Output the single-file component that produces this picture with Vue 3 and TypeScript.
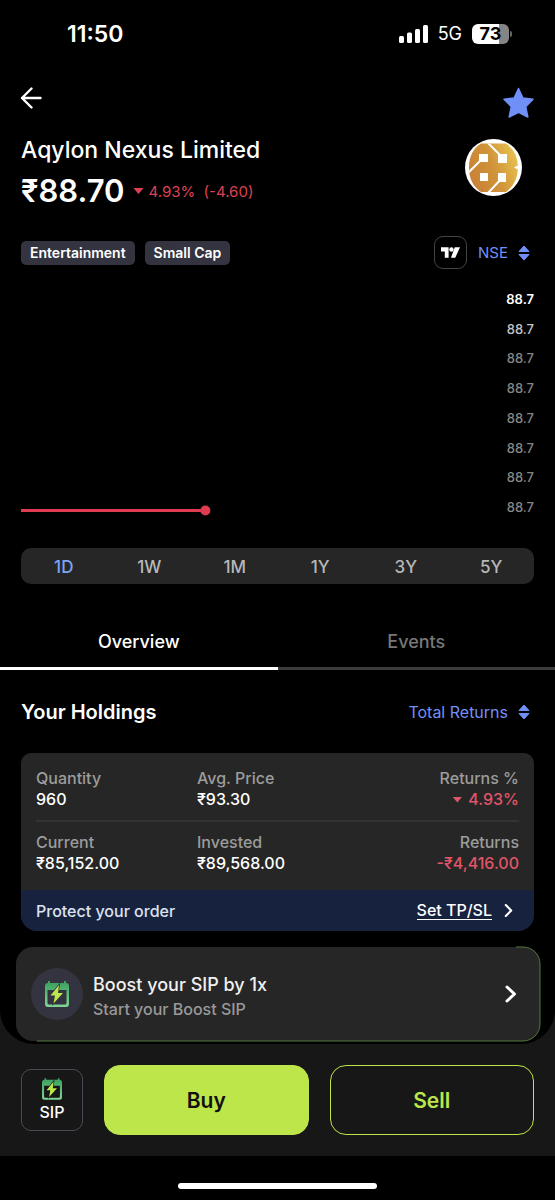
<script setup lang="ts">
import { ref } from 'vue'

interface Figure {
  label: string
  value: string
  loss?: boolean
  arrow?: boolean
}

const tags: string[] = ['Entertainment', 'Small Cap']
const axisLabels: string[] = Array.from({ length: 8 }, () => '88.7')
const periods: string[] = ['1D', '1W', '1M', '1Y', '3Y', '5Y']
const tabs: string[] = ['Overview', 'Events']

const figureRows: Figure[][] = [
  [
    { label: 'Quantity', value: '960' },
    { label: 'Avg. Price', value: '₹93.30' },
    { label: 'Returns %', value: '4.93%', loss: true, arrow: true },
  ],
  [
    { label: 'Current', value: '₹85,152.00' },
    { label: 'Invested', value: '₹89,568.00' },
    { label: 'Returns', value: '-₹4,416.00', loss: true },
  ],
]

const period = ref('1D')
const tab = ref('Overview')
const starred = ref(true)
</script>

<template>
  <div class="screen">
    <div class="content">
      <div class="status">
        <span class="clock">11:50</span>
        <div class="status-right">
          <svg class="signal" viewBox="0 0 29 18" aria-hidden="true">
            <rect x="0" y="11" width="5" height="7" rx="1.5" />
            <rect x="8" y="7.500" width="5" height="10.500" rx="1.500" />
            <rect x="16" y="4" width="5" height="14" rx="1.500" />
            <rect x="24" y="0" width="5" height="18" rx="1.500" />
          </svg>
          <span class="network">5G</span>
          <span class="battery"><span class="battery-level">73</span></span>
        </div>
      </div>

      <header class="nav">
        <button class="plain" type="button" aria-label="Back">
          <svg class="back" viewBox="0 0 22 22" aria-hidden="true">
            <path d="M20.500 11H2M11.500 1.500 2 11l9.500 9.500" />
          </svg>
        </button>
        <button class="plain" type="button" aria-label="Watchlist" :aria-pressed="starred" @click="starred = !starred">
          <svg class="star" viewBox="0 0 32 32" aria-hidden="true">
            <path d="M16 1.500 20.400 11 30.500 12.300 23.200 19.600 25.300 30 16 25.400 6.700 30 8.800 19.600 1.500 12.300 11.600 11Z" />
          </svg>
        </button>
      </header>

      <section class="identity">
        <div>
          <h1>Aqylon Nexus Limited</h1>
          <p class="quote">
            <span class="price">₹88.70</span>
            <span class="change"><i class="down"></i>4.93%&nbsp; (-4.60)</span>
          </p>
        </div>
        <svg class="logo" viewBox="0 0 57 57" aria-hidden="true">
          <defs>
            <linearGradient id="gold" x1="0" y1=".7" x2="1" y2=".3">
              <stop offset="0" stop-color="#c77d36" />
              <stop offset=".5" stop-color="#d09439" />
              <stop offset="1" stop-color="#edca55" />
            </linearGradient>
            <clipPath id="coin"><path d="M16 4.500H41Q53 13 53 28.500T41 53H16Q4 45 4 28.500T16 4.500Z" /></clipPath>
          </defs>
          <circle cx="28.500" cy="28.500" r="28.500" fill="#fff" />
          <g clip-path="url(#coin)">
            <rect width="57" height="57" fill="url(#gold)" />
            <path d="M3 34 18 19M22 3 38 19M38 38 23 54" fill="none" stroke="#fff" stroke-width="2" />
            <path d="M57 24 49 28.500 57 33Z" fill="#fff" />
            <path d="M14 15h9v8h-9zM33 15h9v9h-9zM15 34h8v8h-8zM33 34h8v9h-8z" fill="#fff" />
          </g>
        </svg>
      </section>

      <section class="meta">
        <ul class="tags">
          <li v-for="tag in tags" :key="tag">{{ tag }}</li>
        </ul>
        <div class="market">
          <button class="chart-link" type="button" aria-label="Open advanced chart">
            <svg viewBox="0 0 20 11" aria-hidden="true">
              <path d="M0 0h8v11H4V4.500H0zM14.500 0H20l-5 11h-4.500z" />
              <circle cx="11" cy="2.300" r="2.300" />
            </svg>
          </button>
          <button class="switch exchange" type="button">
            NSE
            <svg class="sort" viewBox="0 0 12 16" aria-hidden="true">
              <path d="M6 1 11 6.500H1ZM6 15 11 9.500H1Z" />
            </svg>
          </button>
        </div>
      </section>

      <section class="chart" aria-label="Price chart">
        <svg class="plot" aria-hidden="true">
          <line x1="0" y1="220.500" x2="40%" y2="220.500" />
          <circle cx="40%" cy="220.500" r="5" />
        </svg>
        <ol class="axis">
          <li v-for="(label, i) in axisLabels" :key="i">{{ label }}</li>
        </ol>
      </section>

      <div class="periods">
        <button
          v-for="p in periods"
          :key="p"
          type="button"
          :class="{ active: p === period }"
          :aria-pressed="p === period"
          @click="period = p"
        >{{ p }}</button>
      </div>

      <div class="tabs" role="tablist">
        <button
          v-for="t in tabs"
          :key="t"
          type="button"
          role="tab"
          :class="{ active: t === tab }"
          :aria-selected="t === tab"
          @click="tab = t"
        >{{ t }}</button>
      </div>

      <section class="holdings">
        <div class="section-head">
          <h2>Your Holdings</h2>
          <button class="switch" type="button">
            Total Returns
            <svg class="sort" viewBox="0 0 12 16" aria-hidden="true">
              <path d="M6 1 11 6.500H1ZM6 15 11 9.500H1Z" />
            </svg>
          </button>
        </div>
        <div class="card">
          <div class="figures">
            <dl v-for="(row, i) in figureRows" :key="i">
              <div v-for="f in row" :key="f.label">
                <dt>{{ f.label }}</dt>
                <dd :class="{ loss: f.loss }"><i v-if="f.arrow" class="down"></i>{{ f.value }}</dd>
              </div>
            </dl>
          </div>
          <div class="protect">
            <span>Protect your order</span>
            <a href="#tpsl">
              <span class="underlined">Set TP/SL</span>
              <svg viewBox="0 0 8 12" aria-hidden="true"><path d="M1.500 1 6.500 6l-5 5" /></svg>
            </a>
          </div>
        </div>
      </section>

      <a class="boost" href="#boost">
        <svg class="boost-edge" aria-hidden="true">
          <rect x="0" y="0" width="100%" height="100%" rx="17" />
        </svg>
        <span class="boost-icon">
          <svg viewBox="0 0 24 26" aria-hidden="true">
            <defs>
              <linearGradient id="calA" x1="0" y1="0" x2="0" y2="1">
                <stop offset="0" stop-color="#3a9e5c" />
                <stop offset="1" stop-color="#7fd694" />
              </linearGradient>
            </defs>
            <path fill="url(#calA)" fill-rule="evenodd" d="M3 0h2v2h14V0h2v2q3 0 3 3v18q0 3-3 3H3q-3 0-3-3V5q0-3 3-3ZM2.500 9v13q0 1.500 1.500 1.500h16q1.500 0 1.500-1.500V9Z" />
            <path class="bolt" stroke="#33343f" d="M14 4 5.500 14.500H10L8.500 22.500 18 12h-5Z" />
          </svg>
        </span>
        <span class="boost-text">
          <strong>Boost your SIP by 1x</strong>
          <small>Start your Boost SIP</small>
        </span>
        <svg class="boost-arrow" viewBox="0 0 12 18" aria-hidden="true"><path d="M2 2l7.500 7L2 16" /></svg>
      </a>
    </div>

    <footer class="actions">
      <button class="sip" type="button">
        <svg viewBox="0 0 24 26" aria-hidden="true">
          <path fill="url(#calA)" fill-rule="evenodd" d="M3 0h2v2h14V0h2v2q3 0 3 3v18q0 3-3 3H3q-3 0-3-3V5q0-3 3-3ZM2.500 9v13q0 1.500 1.500 1.500h16q1.500 0 1.500-1.500V9Z" />
          <path class="bolt" stroke="#171717" d="M14 4 5.500 14.500H10L8.500 22.500 18 12h-5Z" />
        </svg>
        SIP
      </button>
      <button class="buy" type="button">Buy</button>
      <button class="sell" type="button">Sell</button>
    </footer>
    <div class="home"><span></span></div>
  </div>
</template>

<style>
body {
  background: #000;
}
</style>

<style scoped>
.screen {
  background: #171717;
  color: #fff;
  font-family: Inter, 'Liberation Sans', sans-serif;
  font-size: 16px;
  font-weight: 500;
}
.screen * {
  box-sizing: border-box;
}
button {
  font: inherit;
  color: inherit;
  background: none;
  border: 0;
  padding: 0;
  cursor: pointer;
}
a {
  color: inherit;
  text-decoration: none;
}
h1, h2, p, ul, ol, dl, dd {
  margin: 0;
  padding: 0;
}
ul, ol {
  list-style: none;
}
svg {
  display: block;
}
.content {
  background: #000;
  border-radius: 0 0 34px 34px;
  padding-bottom: 3px;
}
.status {
  display: flex;
  justify-content: space-between;
  align-items: center;
  height: 67px;
  padding: 0 43px 0 67px;
}
.clock {
  font-size: 23px;
  font-weight: 600;
}
.status-right {
  display: flex;
  align-items: center;
  gap: 10px;
}
.signal {
  width: 29px;
  height: 18px;
  fill: #fff;
}
.network {
  font-size: 18px;
  font-weight: 400;
}
.battery {
  position: relative;
  width: 37px;
  height: 20px;
  margin-right: 3px;
  border-radius: 6px;
  background: linear-gradient(90deg, #fff 73%, #858585 73%);
  color: #000;
  font-size: 18px;
  font-weight: 700;
  line-height: 20px;
  text-align: center;
}
.battery::after {
  content: '';
  position: absolute;
  left: 38px;
  top: 7px;
  width: 2px;
  height: 6px;
  border-radius: 0 2px 2px 0;
  background: #666;
}
.nav {
  display: flex;
  justify-content: space-between;
  align-items: flex-start;
  padding: 20px 20px 16px;
}
.back {
  width: 22px;
  height: 22px;
  fill: none;
  stroke: #fff;
  stroke-width: 2.4;
  stroke-linecap: round;
  stroke-linejoin: round;
}
.star {
  width: 33px;
  height: 32px;
  fill: #7090f8;
  stroke: #7090f8;
  stroke-width: 1.5;
  stroke-linejoin: round;
}
.identity {
  display: flex;
  justify-content: space-between;
  align-items: flex-start;
  padding: 0 33px 0 21px;
}
h1 {
  font-size: 23px;
  font-weight: 500;
  line-height: 30px;
}
.quote {
  display: flex;
  align-items: center;
  gap: 9px;
  margin-top: 6px;
}
.price {
  font-size: 31px;
  font-weight: 600;
  line-height: 40px;
}
.change {
  display: flex;
  align-items: center;
  gap: 5px;
  color: #df4055;
  font-size: 15px;
  font-weight: 400;
}
.down {
  width: 10px;
  height: 6px;
  background: currentColor;
  clip-path: polygon(0 0, 100% 0, 50% 100%);
}
.logo {
  width: 57px;
  height: 57px;
  margin-top: 4px;
}
.meta {
  display: flex;
  justify-content: space-between;
  align-items: center;
  margin-top: 25px;
  padding: 0 25px 0 21px;
}
.tags {
  display: flex;
  gap: 10px;
}
.tags li {
  padding: 0 9px;
  border-radius: 5px;
  background: #33343f;
  font-size: 14px;
  font-weight: 600;
  line-height: 24px;
}
.market {
  display: flex;
  align-items: center;
  gap: 11px;
}
.chart-link {
  display: grid;
  place-items: center;
  width: 33px;
  height: 33px;
  border: 1px solid #444;
  border-radius: 9px;
}
.chart-link svg {
  width: 19px;
  height: 11px;
  fill: #fff;
}
.switch {
  display: flex;
  align-items: center;
  gap: 10px;
  color: #7090f8;
  font-weight: 400;
}
.exchange {
  font-size: 15px;
}
.sort {
  width: 12px;
  height: 16px;
  fill: #7090f8;
  stroke: #7090f8;
  stroke-linejoin: round;
}
.chart {
  display: flex;
  margin: 21px 21px 32px;
}
.plot {
  flex: 1;
  min-width: 0;
  height: 226px;
}
.plot line {
  stroke: #df3c52;
  stroke-width: 3;
}
.plot circle {
  fill: #df3c52;
}
.axis {
  display: flex;
  flex-direction: column;
  justify-content: space-between;
  width: 52px;
  color: #858585;
  font-size: 13px;
  line-height: 18px;
  text-align: right;
}
.axis li:first-child {
  color: #fff;
  font-weight: 600;
}
.axis li:nth-child(2) {
  color: #c4c4c4;
}
.periods {
  display: flex;
  margin: 0 21px;
  border-radius: 10px;
  background: #262626;
}
.periods button {
  flex: 1;
  padding-top: 2px;
  color: #b8b8b8;
  font-size: 17px;
  line-height: 34px;
}
.periods .active {
  color: #7ba5f5;
}
.tabs {
  display: flex;
  margin-top: 32px;
}
.tabs button {
  flex: 1;
  padding-top: 1px;
  border-bottom: 3px solid #3c3c3c;
  color: #777;
  font-size: 18px;
  line-height: 50px;
}
.tabs .active {
  border-color: #fff;
  color: #fff;
}
.holdings {
  padding: 26px 21px 0;
}
.section-head {
  display: flex;
  justify-content: space-between;
  align-items: center;
  height: 32px;
  padding-right: 4px;
}
h2 {
  font-size: 20px;
  font-weight: 600;
}
.card {
  margin-top: 25px;
  border-radius: 10px 10px 16px 16px;
  background: #262626;
  overflow: hidden;
}
.figures {
  padding: 15px 15px 16px;
}
dl {
  display: grid;
  grid-template-columns: repeat(3, 1fr);
  line-height: 21px;
}
dl + dl {
  margin-top: 10px;
  padding-top: 10px;
  border-top: 2px solid #333;
}
dl div:last-child {
  justify-self: end;
  text-align: right;
}
dt {
  color: #9c9c9c;
}
dd {
  display: flex;
  align-items: center;
  gap: 6px;
}
dl div:last-child dd {
  justify-content: flex-end;
}
.loss {
  color: #e05566;
}
.protect {
  display: flex;
  justify-content: space-between;
  align-items: center;
  height: 41px;
  padding: 0 21px 0 15px;
  background: #17223f;
  color: #dce2f0;
}
.protect a {
  display: flex;
  align-items: center;
  gap: 12px;
  color: #fff;
}
.underlined {
  border-bottom: 1px solid #fff;
  line-height: 18px;
}
.protect svg {
  width: 9px;
  height: 13px;
  fill: none;
  stroke: #fff;
  stroke-width: 2;
  stroke-linecap: round;
  stroke-linejoin: round;
}
.boost {
  position: relative;
  display: flex;
  align-items: center;
  height: 94px;
  margin: 16px 15px 0 16px;
  padding: 0 23px 0 15px;
  border-radius: 17px;
  background: #262626;
}
.boost-edge {
  position: absolute;
  inset: 0;
  width: 100%;
  height: 100%;
  overflow: visible;
  clip-path: polygon(calc(100% - 24px) -1px, 101% -1px, 101% 102%, 21px 102%, 21px 90%, calc(100% - 24px) 90%);
}
.boost-edge rect {
  fill: none;
  stroke: #557a3c;
  stroke-width: 1;
}
.boost-icon {
  display: grid;
  place-items: center;
  width: 52px;
  height: 52px;
  border-radius: 50%;
  background: #33343f;
}
.boost-icon svg {
  width: 24px;
  height: 26px;
}
.bolt {
  fill: #bde84b;
  stroke-width: 1.5;
  paint-order: stroke;
}
.boost-text {
  flex: 1;
  margin-left: 10px;
  padding-top: 5px;
}
.boost-text strong,
.boost-text small {
  display: block;
  font-weight: 500;
  line-height: 24px;
}
.boost-text strong {
  color: #f0f0f0;
  font-size: 18px;
}
.boost-text small {
  color: #999;
  font-size: 16px;
}
.boost-arrow {
  width: 12px;
  height: 18px;
  fill: none;
  stroke: #fff;
  stroke-width: 3;
  stroke-linecap: round;
  stroke-linejoin: round;
}
.actions {
  display: flex;
  align-items: center;
  gap: 21px;
  padding: 21px;
}
.sip {
  display: flex;
  flex-direction: column;
  align-items: center;
  justify-content: center;
  gap: 3px;
  width: 62px;
  height: 62px;
  border: 1px solid #4a4a54;
  border-radius: 10px;
  line-height: 19px;
}
.sip svg {
  width: 20px;
  height: 22px;
}
.buy,
.sell {
  flex: 1;
  height: 70px;
  border: 1px solid #bce64a;
  border-radius: 16px;
  font-size: 21px;
  font-weight: 600;
}
.buy {
  background: #bce64a;
  color: #111;
}
.sell {
  color: #bce64a;
}
.home {
  display: flex;
  justify-content: center;
  height: 44px;
  padding-top: 27px;
  background: #000;
}
.home span {
  width: 36%;
  height: 6px;
  border-radius: 3px;
  background: #fff;
}
</style>
